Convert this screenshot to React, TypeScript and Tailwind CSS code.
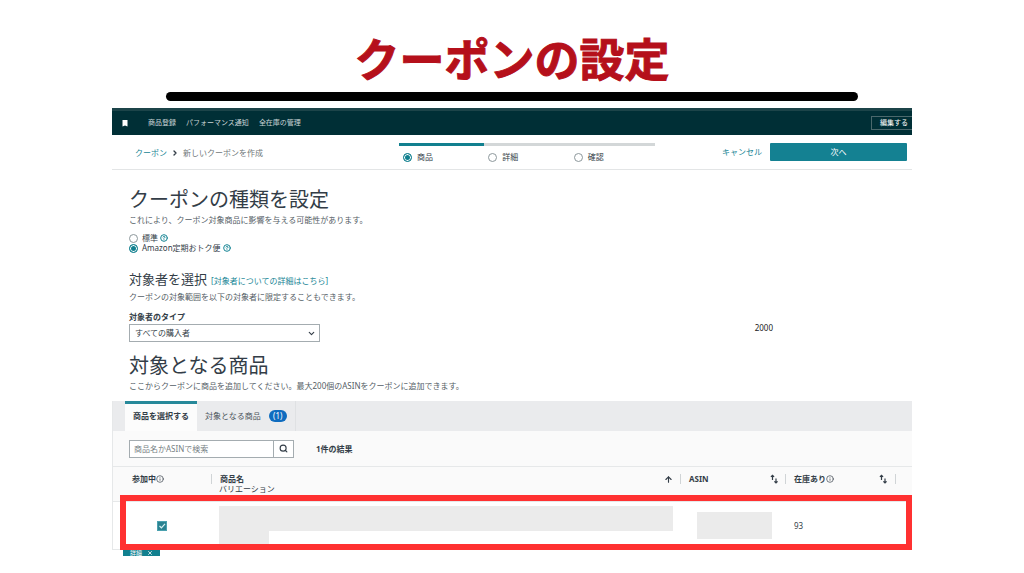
import { useState } from 'react'
import { ArrowUp, ChevronDown, ChevronRight, CircleHelp, Info, Search, X } from 'lucide-react'

const steps = ['商品', '詳細', '確認']

const SortIcon = () => (
  <svg viewBox="0 0 8 10" className="w-2 h-[10px]" fill="none" stroke="#333d47" strokeWidth="1.2">
    <path d="M2.5 6V1.4M0.9 2.9L2.5 1.3L4.1 2.9" />
    <path d="M6 4.5V9M4.4 7.4L6 9L7.6 7.4" />
  </svg>
)

const BookmarkIcon = () => (
  <svg viewBox="0 0 6 7" className="w-[6px] h-[7px]" fill="#fff">
    <path d="M0.5 0h5v6.6L3 5.4L0.5 6.6z" />
  </svg>
)

const radioClass =
  'appearance-none shrink-0 w-[9px] h-[9px] rounded-full border border-[#8d989c] bg-white checked:border-[#11808f] checked:bg-[#11808f] checked:shadow-[inset_0_0_0_1px_#fff]'

const TopBar = () => (
  <nav className="flex items-center h-[27px] pl-[10px] bg-[#002f36] border-t-[3px] border-[#1c4449] text-[7px] text-[#c9d4d5]">
    <BookmarkIcon />
    <div className="flex gap-[10px] ml-5">
      <a href="#register">商品登録</a>
      <a href="#performance">パフォーマンス通知</a>
      <a href="#inventory">全在庫の管理</a>
    </div>
    <button className="ml-auto h-[14px] pl-2 pr-1 border border-r-0 border-[#4b686c] text-white">編集する</button>
  </nav>
)

const SubHeader = ({ step, setStep }: { step: number; setStep: (n: number) => void }) => (
  <header className="flex items-start h-[35px] border-b border-[#e3e5e6] pt-2 pl-[23px] pr-[5px]">
    <div className="flex items-center gap-1 h-5 w-[264px] text-[#6f7779]">
      <a href="#coupons" className="text-[#178595]">クーポン</a>
      <ChevronRight size={8} strokeWidth={4} className="text-[#333d47]" />
      <span>新しいクーポンを作成</span>
    </div>
    <div className="flex w-[256px]">
      {steps.map((name, i) => (
        <label
          key={name}
          className={`flex flex-1 items-center gap-[5px] pl-1 pt-1 h-[21px] border-t-[3px] ${i <= step ? 'border-[#11808f]' : 'border-[#d3d7d8]'}`}
        >
          <input type="radio" name="step" checked={i === step} onChange={() => setStep(i)} className={radioClass} />
          {name}
        </label>
      ))}
    </div>
    <a href="#cancel" className="ml-auto leading-[18px] text-[#178595]">キャンセル</a>
    <button className="ml-2 w-[137px] h-[18px] rounded-[1px] bg-[#148192] text-white">次へ</button>
  </header>
)

const CouponType = () => (
  <section>
    <h2 className="text-[20px] leading-7">クーポンの種類を設定</h2>
    <p className="leading-3 text-[#555e66]">これにより、クーポン対象商品に影響を与える可能性があります。</p>
    <div className="mt-[7px] leading-[10px]">
      <label className="flex items-center gap-1 h-[10px]">
        <input type="radio" name="type" className={radioClass} />
        <span>標準</span>
        <CircleHelp size={8} strokeWidth={3} className="-ml-[2px] text-[#178595]" />
      </label>
      <label className="flex items-center gap-1 h-[10px]">
        <input type="radio" name="type" defaultChecked className={radioClass} />
        <span>Amazon定期おトク便</span>
        <CircleHelp size={8} strokeWidth={3} className="-ml-[2px] text-[#178595]" />
      </label>
    </div>
  </section>
)

const Audience = () => (
  <section className="mt-4">
    <div className="flex items-baseline gap-1">
      <h3 className="text-[13px] leading-5">対象者を選択</h3>
      <a href="#audience" className="text-[#178595]">[対象者についての詳細はこちら]</a>
    </div>
    <p className="mt-[2px] leading-3 text-[#555e66]">クーポンの対象範囲を以下の対象者に限定することもできます。</p>
    <label htmlFor="audience" className="block mt-2 leading-3 font-bold">対象者のタイプ</label>
    <div className="flex items-start justify-between mt-px pr-[139px]">
      <div className="relative w-[191px]">
        <select id="audience" className="appearance-none block w-full h-[18px] px-[5px] border border-[#a4acb0] bg-white">
          <option>すべての購入者</option>
        </select>
        <ChevronDown size={9} strokeWidth={3} className="absolute right-1 top-[5px] pointer-events-none" />
      </div>
      <span className="leading-2 text-[#222]">2000</span>
    </div>
  </section>
)

const Tabs = () => (
  <div className="flex h-[30px] pl-3 bg-[#eaebed]">
    <button className="w-[72px] pb-[3px] bg-[#fcfcfc] border-t-[3px] border-[#27899a] font-bold">商品を選択する</button>
    <button className="flex items-center gap-2 px-2 border-r border-[#dfe1e3] text-[#4c555c]">
      対象となる商品
      <span className="w-[18px] h-3 rounded-full bg-[#0f6cbf] leading-3 text-white">(1)</span>
    </button>
  </div>
)

const SearchRow = () => (
  <div className="flex items-center h-[35px] pl-4">
    <div className="flex h-[18px] w-[165px] border border-[#a4acb0] bg-white">
      <input
        type="text"
        aria-label="商品名かASINで検索"
        placeholder="商品名かASINで検索"
        className="flex-1 min-w-0 px-1 placeholder:text-[#777f84]"
      />
      <button aria-label="検索" className="flex items-center justify-center w-5 border-l border-[#a4acb0]">
        <Search size={9} strokeWidth={3} />
      </button>
    </div>
    <span className="ml-[22px] font-bold">1件の結果</span>
  </div>
)

const ProductTable = () => (
  <div className="relative">
    <table className="w-full table-fixed text-left">
      <colgroup>
        <col className="w-[98px]" />
        <col />
        <col className="w-[105px]" />
        <col className="w-[126px]" />
      </colgroup>
      <thead>
        <tr className="h-[35px] align-top border-y border-[#e6e8e9] leading-[10px]">
          <th className="pt-[7px] pl-[19px]">
            <div className="flex items-center h-[10px]">
              参加中
              <Info size={8} />
            </div>
          </th>
          <th className="pt-[7px]">
            <div className="flex items-center justify-between h-[10px] pl-2 pr-[7px] border-x border-[#d0d4d6]">
              商品名
              <ArrowUp size={9} strokeWidth={3} />
            </div>
            <div className="pl-2 font-normal">バリエーション</div>
          </th>
          <th className="pt-[7px]">
            <div className="flex items-center justify-between h-[10px] pl-2 pr-[7px] border-r border-[#d0d4d6]">
              ASIN
              <SortIcon />
            </div>
          </th>
          <th className="pt-[7px] pr-4">
            <div className="flex items-center h-[10px] pl-2 pr-2 border-r border-[#d0d4d6]">
              在庫あり
              <Info size={8} className="mr-auto" />
              <SortIcon />
            </div>
          </th>
        </tr>
      </thead>
      <tbody className="bg-white">
        <tr className="h-12 border-b border-[#e6e8e9]">
          <td className="pl-11">
            <input
              type="checkbox"
              aria-label="参加中"
              defaultChecked
              className="peer appearance-none block w-[10px] h-[10px] border border-[#4ba1af] bg-[#2a8291]"
            />
            <svg viewBox="0 0 10 10" className="relative -mt-[10px] hidden peer-checked:block w-[10px] h-[10px] pointer-events-none" fill="none" stroke="#d7f0f3" strokeWidth="1.2">
              <path d="M2.5 5L4.4 6.8L8 2.8" />
            </svg>
          </td>
          <td className="align-top pt-1 pl-2">
            <div className="mr-2 h-[25px] bg-[#ebebeb]" />
            <div className="w-[50px] h-[14px] bg-[#ebebeb]" />
          </td>
          <td className="pl-4 pr-[14px]">
            <div className="h-[27px] bg-[#ebebeb]" />
          </td>
          <td className="pl-2">93</td>
        </tr>
      </tbody>
    </table>
    <div className="absolute top-[29px] bottom-0 left-[7px] right-0 border-[6px] border-[#ff3131] pointer-events-none" />
  </div>
)

export default function App() {
  const [step, setStep] = useState(0)

  return (
    <div className="min-h-screen bg-white font-['Noto_Sans','Noto_Sans_CJK_JP',sans-serif] text-[8px] leading-3 text-[#333d47]">
      <h1 className="pt-[26px] pb-[2px] text-center font-['Noto_Sans_CJK_JP',sans-serif] text-[45px] leading-[64px] font-bold text-[#b5101b] [-webkit-text-stroke:1px_#b5101b]">
        クーポンの設定
      </h1>
      <div className="mx-[166px] h-[9px] rounded-full bg-black" />
      <main className="mx-28 mt-[7px]">
        <TopBar />
        <SubHeader step={step} setStep={setStep} />
        <div className="pt-4 pl-[17px]">
          <CouponType />
          <Audience />
          <section className="mt-[10px]">
            <h2 className="text-[20px] leading-7">対象となる商品</h2>
            <p className="leading-3 text-[#555e66]">
              ここからクーポンに商品を追加してください。最大200個のASINをクーポンに追加できます。
            </p>
          </section>
        </div>
        <div className="mt-[9px] bg-[#fafafa] border-l border-[#e6e8e9]">
          <Tabs />
          <SearchRow />
          <ProductTable />
        </div>
        <button className="flex items-center justify-between ml-[11px] px-[7px] w-[37px] h-[6px] bg-[#11808f] text-[6px] leading-[6px] text-white">
          詳細
          <X size={6} strokeWidth={3} />
        </button>
      </main>
    </div>
  )
}
